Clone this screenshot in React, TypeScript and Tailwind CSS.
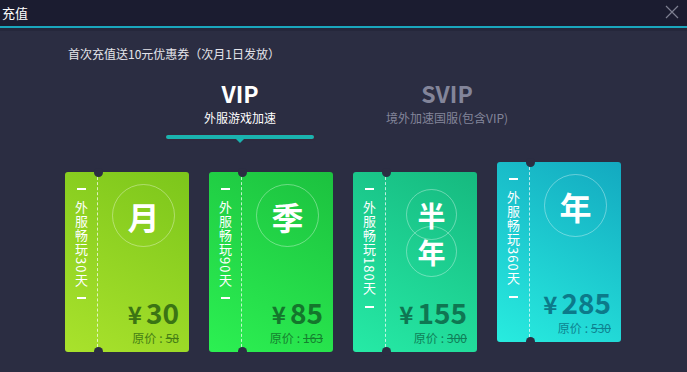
import React from "react";

const font = { fontFamily: '"Microsoft YaHei","Noto Sans CJK SC",sans-serif' };

type Card = {
  days: string;
  chars: string[];
  price: string;
  orig: string;
  bg: string;
  priceColor: string;
  lift?: boolean;
};

const cards: Card[] = [
  { days: "外服畅玩30天", chars: ["月"], price: "30", orig: "58", bg: "bg-[linear-gradient(30deg,#a9e22c,#7cc61b)]", priceColor: "text-[#3b7414]" },
  { days: "外服畅玩90天", chars: ["季"], price: "85", orig: "163", bg: "bg-[linear-gradient(30deg,#2cf052,#1cc13f)]", priceColor: "text-[#14762c]" },
  { days: "外服畅玩180天", chars: ["半", "年"], price: "155", orig: "300", bg: "bg-[linear-gradient(30deg,#26eaa6,#16b97f)]", priceColor: "text-[#0f7652]" },
  { days: "外服畅玩360天", chars: ["年"], price: "285", orig: "530", bg: "bg-[linear-gradient(30deg,#28ecdf,#13a9c0)]", priceColor: "text-[#0c7a8a]", lift: true },
];

function Ticket({ c }: { c: Card }) {
  const double = c.chars.length === 2;
  return (
    <div className={`relative w-[124px] h-[180px] rounded-[3px] flex ${c.bg} ${c.lift ? "mb-[10px]" : ""}`}>
      <div className="absolute left-[29px] top-[-4px] w-[9px] h-[9px] rounded-full bg-[#2b2d42]" />
      <div className="absolute left-[29px] bottom-[-4px] w-[9px] h-[9px] rounded-full bg-[#2b2d42]" />
      <div className="w-[33px] h-full border-r border-dashed border-white/70 flex flex-col items-center pt-[14px] text-white">
        <div className="w-[9px] h-[2px] bg-white mt-[2px]" />
        <div className="[writing-mode:vertical-rl] text-[13px] leading-[16px] tracking-[1px] mt-[11px]">{c.days}</div>
        <div className="w-[9px] h-[2px] bg-white mt-[10px]" />
      </div>
      <div className="flex-1 flex flex-col items-center relative">
        {double ? (
          <div className="flex flex-col items-center mt-[17px]">
            <div className="w-[51px] h-[51px] rounded-full border-[1.5px] border-white/35 flex items-center justify-center text-white text-[28px] font-bold">{c.chars[0]}</div>
            <div className="w-[51px] h-[51px] -mt-[14px] rounded-full border-[1.5px] border-white/35 flex items-center justify-center text-white text-[28px] font-bold">{c.chars[1]}</div>
          </div>
        ) : (
          <div className="mt-[12px] w-[63px] h-[63px] rounded-full border-[1.5px] border-white/35 flex items-center justify-center text-white text-[32px] font-bold">{c.chars[0]}</div>
        )}
        <div className="absolute right-[10px] bottom-[6px] flex flex-col items-end">
          <div className={`${c.priceColor} font-bold text-[28px] leading-[30px] flex items-baseline`}>
            <span className="text-[24px] mr-[4px]">¥</span>
            <span>{c.price}</span>
          </div>
          <div className={`${c.priceColor} opacity-90 text-[12px] leading-[16px] mt-[1px] whitespace-nowrap flex`}>
            <span>原价</span>
            <span className="mx-[3px]">:</span>
            <span className="line-through">{c.orig}</span>
          </div>
        </div>
      </div>
    </div>
  );
}

export default function App() {
  return (
    <div className="w-[687px] h-[372px] bg-[#2b2d42] overflow-hidden relative" style={font}>
      <div className="h-[26px] bg-[#1b1c30] flex items-center justify-between pl-[2px] pr-[8px]">
        <span className="text-white text-[13px]">充值</span>
        <svg width="14" height="14" viewBox="0 0 14 14" className="mt-[-2px]">
          <path d="M1 1L13 13M13 1L1 13" stroke="#7d7f90" strokeWidth="1.2" />
        </svg>
      </div>
      <div className="h-[2px] bg-[#1aa6bd]" />
      <div className="h-[3px] bg-[#25273b]" />
      <div className="pl-[68px] pt-[15px] text-[12px] text-[#e4e4ea] leading-[16px]">首次充值送10元优惠券（次月1日发放）</div>
      <div className="flex mt-[17px] pl-[166px]">
        <div className="w-[148px] flex flex-col items-center">
          <div className="text-white font-bold text-[23px] leading-[28px]">VIP</div>
          <div className="text-white text-[12px] leading-[16px] mt-[3px]">外服游戏加速</div>
          <div className="relative w-[148px] h-[4px] bg-[#1ab3af] rounded-full mt-[9px] shadow-[0_0_2px_#5a2030]">
            <div className="absolute left-1/2 -translate-x-1/2 top-[3px] w-0 h-0 border-l-[5px] border-r-[5px] border-t-[5px] border-l-transparent border-r-transparent border-t-[#1ab3af]" />
          </div>
        </div>
        <div className="w-[148px] ml-[59px] flex flex-col items-center">
          <div className="text-[#83859a] font-bold text-[23px] leading-[28px]">SVIP</div>
          <div className="text-[#83859a] text-[12px] leading-[16px] mt-[3px] whitespace-nowrap">境外加速国服(包含VIP)</div>
        </div>
      </div>
      <div className="flex items-end gap-[20px] pl-[65px] mt-[23px]">
        {cards.map((c, i) => (
          <Ticket key={i} c={c} />
        ))}
      </div>
    </div>
  );
}
